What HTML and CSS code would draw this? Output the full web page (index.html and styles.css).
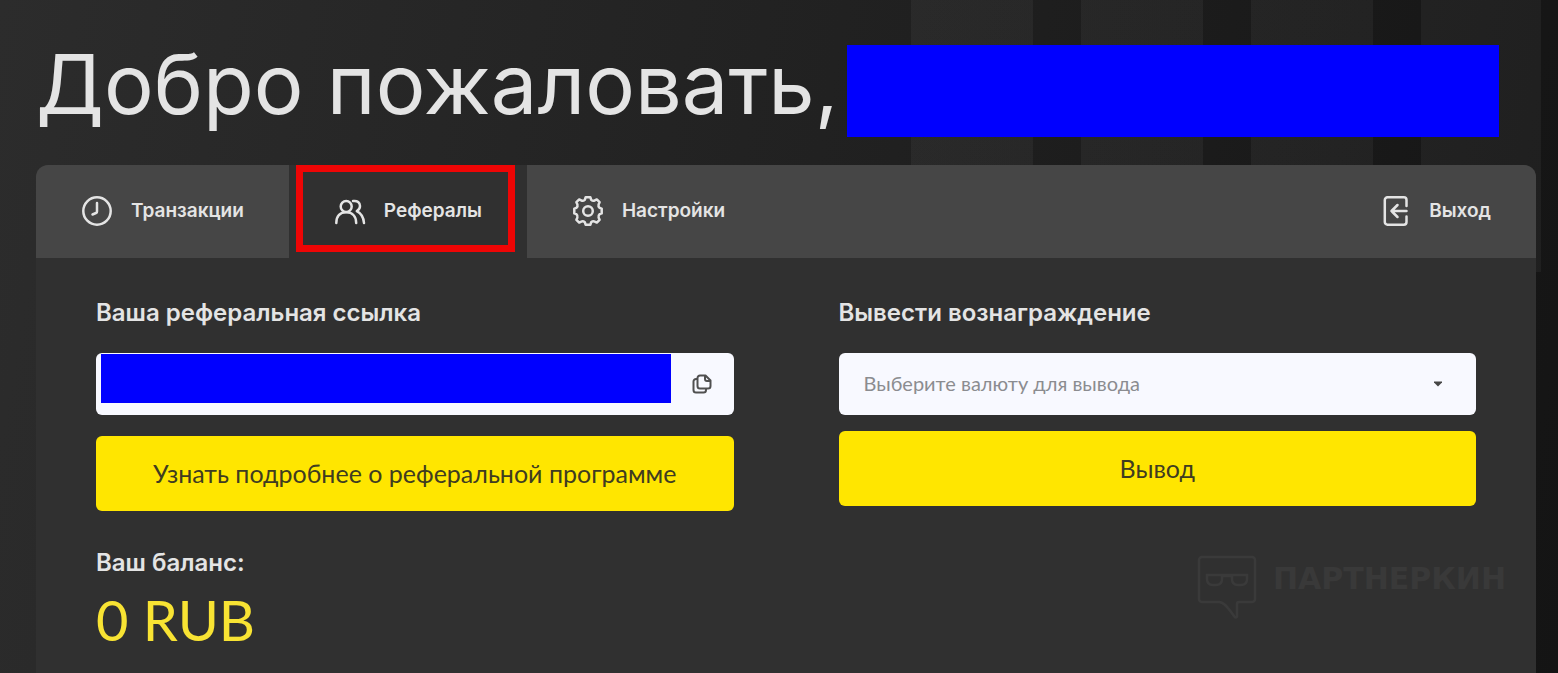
FILE: index.html
```
<!DOCTYPE html>
<html lang="ru">
<head>
  <meta charset="UTF-8">
  <meta name="viewport" content="width=device-width, initial-scale=1.0">
  <title>Личный кабинет</title>
  <link rel="stylesheet" href="styles.css">
</head>
<body>
  <div class="stripes"></div>

  <h1 class="welcome">Добро пожаловать, <span class="hidden-name"></span></h1>

  <main class="panel">
    <nav class="tabs">
      <a class="tab" href="#transactions">
        <svg class="icon" viewBox="0 0 32 32"><circle cx="16" cy="16" r="13.700"/><path d="M16 8v8.500a1.500 1.500 0 0 1-1 1.500l-3.500 1.500"/></svg>
        Транзакции
      </a>
      <a class="tab active" href="#referrals">
        <svg class="icon" viewBox="0 0 32 32"><circle cx="12.200" cy="11.500" r="5.500"/><path d="M2.300 28c0-7 4-10.800 9.900-10.800s10 4 10 10.800M19 6.100c4.500-.8 7 1.800 7 5 0 2.300-1.200 4-3.200 5 4 2 6.800 6 7.200 11.900"/></svg>
        Рефералы
        <span class="highlight"></span>
      </a>
      <a class="tab" href="#settings">
        <svg class="icon" viewBox="0 0 32 32"><circle cx="16" cy="16" r="4.800"/><path d="M13.600 2.300h4.800l.8 2.600q1.800 1.500 3.600.5l2-1 2.800 2.800-1 2.200q-.6 2 1 3.400l2.100.8v4.800l-2.100.8q-1.600 1.400-1 3.400l1 2.200-2.800 2.800-2-1q-1.800-1-3.600.5l-.8 2.600h-4.800l-.8-2.600q-1.800-1.500-3.600-.5l-2 1-2.800-2.800 1-2.200q.6-2-1-3.400l-2.100-.8v-4.800l2.100-.8q1.600-1.400 1-3.400l-1-2.200 2.800-2.800 2 1q1.800 1 3.600-.5z"/></svg>
        Настройки
      </a>
      <a class="tab logout" href="#logout">
        <svg class="icon" viewBox="0 0 32 32"><path d="M27.500 11V5A2.700 2.700 0 0 0 24.800 2.300H8.500a2.700 2.700 0 0 0-2.700 2.700v22a2.700 2.700 0 0 0 2.700 2.700h16.300a2.700 2.700 0 0 0 2.700-2.700V21.500M27.500 16H12.500M18.500 10L12.500 16l6 6"/></svg>
        Выход
      </a>
    </nav>

    <div class="columns">
      <section>
        <label class="title" for="refLink">Ваша реферальная ссылка</label>
        <div class="link-box">
          <input id="refLink" class="field" type="text" readonly>
          <span class="hidden-link"></span>
          <button class="copy" type="button" aria-label="Скопировать">
            <svg viewBox="0 0 20 20"><path d="M8 1.500h5.500l5 5V12a2.500 2.500 0 0 1-2.500 2.500H8A2.500 2.500 0 0 1 5.500 12V4A2.500 2.500 0 0 1 8 1.500zM13 2v3a2 2 0 0 0 2 2h3M5.500 5H4a2.500 2.500 0 0 0-2.500 2.500V16A2.500 2.500 0 0 0 4 18.500h7.500A2.500 2.500 0 0 0 14 16v-1.500"/></svg>
          </button>
        </div>
        <button class="btn btn-more" type="button">Узнать подробнее о реферальной программе</button>
        <h2 class="title">Ваш баланс:</h2>
        <div class="balance">0 RUB</div>
      </section>

      <section>
        <label class="title" for="currency">Вывести вознаграждение</label>
        <div class="select-box">
          <select id="currency" class="field">
            <option>Выберите валюту для вывода</option>
          </select>
          <svg class="caret" viewBox="0 0 8 6"><path d="M0 .5h8v1L4 5.500 0 1.500z"/></svg>
        </div>
        <button class="btn" type="button">Вывод</button>
      </section>
    </div>

    <div class="partner">
      <svg viewBox="0 0 60 64"><path d="M5 2h50a3 3 0 0 1 3 3v39a3 3 0 0 1-3 3H42a2 2 0 0 0-2 2v12c0 2-2 2-3 0-4-5-9-14-15-14H5a3 3 0 0 1-3-3V5a3 3 0 0 1 3-3zM10 20h40v4c0 4-2 6-6 6h-3c-4 0-6-2-6-6v-3H25v3c0 4-2 6-6 6h-3c-4 0-6-2-6-6z"/></svg>
      <span>ПАРТНЕРКИН</span>
    </div>
  </main>
</body>
</html>
```
FILE: styles.css
```
* {
  box-sizing: border-box;
}
body {
  position: relative;
  display: flex;
  flex-direction: column;
  min-height: 100vh;
  margin: 0;
  padding: 0 22px 0 36px;
  background: linear-gradient(100deg, #2c2c2c, #202020 55%, #141414);
  color: #e4e4e4;
  font-family: Lato, sans-serif;
}
.stripes {
  position: absolute;
  top: 0;
  right: 17px;
  width: 630px;
  height: 272px;
  background: repeating-linear-gradient(to right, rgba(255, 255, 255, 0.045) 0 122px, transparent 122px 170px);
}
.welcome {
  position: relative;
  display: flex;
  gap: 8px;
  height: 92px;
  margin: 45px 37px 28px 0;
  font-family: Inter, sans-serif;
  font-size: 83px;
  font-weight: 400;
  line-height: 78px;
  white-space: nowrap;
}
.hidden-name {
  flex: 1;
  background: #0000ff;
}
.panel {
  position: relative;
  flex: 1;
  overflow: hidden;
  border-radius: 12px 12px 0 0;
  background: #303030;
}
.tabs {
  display: flex;
  background: #464646;
}
.tab {
  position: relative;
  display: flex;
  align-items: center;
  gap: 18px;
  height: 93px;
  padding: 0 45px 2px;
  color: #e4e4e4;
  font-family: Inter, sans-serif;
  font-size: 19px;
  font-weight: 600;
  text-decoration: none;
}
.tab.active {
  background: #303030;
}
.logout {
  margin-left: auto;
}
.icon {
  width: 32px;
  height: 32px;
  fill: none;
  stroke: #e4e4e4;
  stroke-width: 2.5;
  stroke-linecap: round;
  stroke-linejoin: round;
}
.highlight {
  position: absolute;
  top: 0;
  right: 12px;
  bottom: 6px;
  left: 7px;
  border: 7px solid #ee0505;
}
.columns {
  display: grid;
  grid-template-columns: 1fr 1fr;
  gap: 105px;
  padding: 40px 60px 24px;
}
.title {
  display: block;
  margin: 0 0 25px;
  font-family: Inter, sans-serif;
  font-size: 24px;
  font-weight: 600;
  line-height: 30px;
}
.link-box,
.select-box {
  position: relative;
  margin-bottom: 16px;
}
.link-box {
  margin-bottom: 21px;
}
.field {
  display: block;
  width: 100%;
  height: 62px;
  padding: 0 25px 2px;
  border: none;
  border-radius: 6px;
  background: #f8f9ff;
  color: #8b8c90;
  font-family: inherit;
  font-size: 20px;
  appearance: none;
}
.hidden-link {
  position: absolute;
  top: 1px;
  left: 5px;
  right: 63px;
  height: 49px;
  background: #0000ff;
}
.copy {
  position: absolute;
  top: 0;
  right: 0;
  width: 63px;
  height: 62px;
  padding: 0;
  border: none;
  background: none;
  cursor: pointer;
}
.copy svg {
  display: block;
  width: 20px;
  height: 20px;
  margin: auto;
  fill: none;
  stroke: #505050;
  stroke-width: 2;
  stroke-linejoin: round;
}
.caret {
  position: absolute;
  top: 28px;
  right: 34px;
  width: 8px;
  height: 6px;
  fill: #464646;
  pointer-events: none;
}
.btn {
  display: block;
  width: 100%;
  height: 75px;
  padding: 0 0 2px;
  border: none;
  border-radius: 6px;
  background: #ffe600;
  color: #403c20;
  font-family: inherit;
  font-size: 25px;
  cursor: pointer;
}
.btn-more {
  margin-bottom: 37px;
}
h2.title {
  margin-bottom: 12px;
}
.balance {
  color: #f8e333;
  font-size: 56px;
  line-height: 60px;
}
.partner {
  position: absolute;
  top: 390px;
  right: 30px;
  display: flex;
  gap: 16px;
  color: #393939;
  font-family: "DejaVu Sans", sans-serif;
  font-size: 30px;
  font-weight: 700;
  line-height: 48px;
}
.partner svg {
  width: 60px;
  height: 64px;
  fill: none;
  stroke: #3a3a3a;
  stroke-width: 2.5;
}
```
